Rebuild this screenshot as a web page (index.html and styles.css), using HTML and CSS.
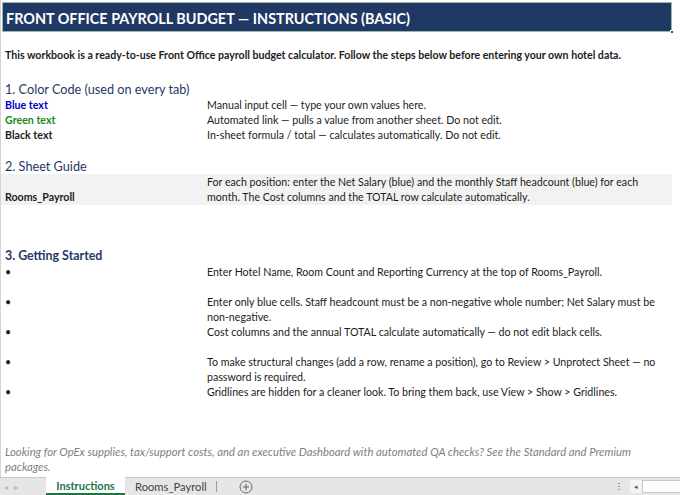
FILE: index.html
```html
<!DOCTYPE html>
<html lang="en">
<head>
<meta charset="utf-8">
<title>Front Office Payroll Budget — Instructions</title>
<link rel="stylesheet" href="styles.css">
</head>
<body>
<div class="window">
  <div class="sheet">
    <div class="title-cell">
      <span class="title-text">FRONT OFFICE PAYROLL BUDGET — INSTRUCTIONS (BASIC)</span>
      <span class="fill-handle"></span>
    </div>

    <div class="row intro">This workbook is a ready-to-use Front Office payroll budget calculator. Follow the steps below before entering your own hotel data.</div>

    <div class="row heading h1">1. Color Code (used on every tab)</div>
    <div class="row pair">
      <div class="col-a bold blue">Blue text</div>
      <div class="col-b">Manual input cell — type your own values here.</div>
    </div>
    <div class="row pair">
      <div class="col-a bold green">Green text</div>
      <div class="col-b">Automated link — pulls a value from another sheet. Do not edit.</div>
    </div>
    <div class="row pair">
      <div class="col-a bold">Black text</div>
      <div class="col-b">In-sheet formula / total — calculates automatically. Do not edit.</div>
    </div>

    <div class="row heading h2">2. Sheet Guide</div>
    <div class="row pair band">
      <div class="col-a bold">Rooms_Payroll</div>
      <div class="col-b">For each position: enter the Net Salary (blue) and the monthly Staff headcount (blue) for each<br>month. The Cost columns and the TOTAL row calculate automatically.</div>
    </div>

    <div class="row heading h3">3. Getting Started</div>
    <div class="steps">
      <div class="row step">
        <div class="col-a">•</div>
        <div class="col-b">Enter Hotel Name, Room Count and Reporting Currency at the top of Rooms_Payroll.</div>
      </div>
      <div class="row step">
        <div class="col-a">•</div>
        <div class="col-b">Enter only blue cells. Staff headcount must be a non-negative whole number; Net Salary must be<br>non-negative.</div>
      </div>
      <div class="row step">
        <div class="col-a">•</div>
        <div class="col-b">Cost columns and the annual TOTAL calculate automatically — do not edit black cells.</div>
      </div>
      <div class="row step">
        <div class="col-a">•</div>
        <div class="col-b">To make structural changes (add a row, rename a position), go to Review &gt; Unprotect Sheet — no<br>password is required.</div>
      </div>
      <div class="row step">
        <div class="col-a">•</div>
        <div class="col-b">Gridlines are hidden for a cleaner look. To bring them back, use View &gt; Show &gt; Gridlines.</div>
      </div>
    </div>

    <div class="row footer">Looking for OpEx supplies, tax/support costs, and an executive Dashboard with automated QA checks? See the Standard and Premium<br>packages.</div>
  </div>

  <div class="tabbar">
    <div class="nav-arrows"><span>&#9666;</span><span>&#9656;</span></div>
    <div class="tab active">Instructions</div>
    <div class="tab">Rooms_Payroll</div>
    <div class="tab-sep"></div>
    <div class="add-sheet">
      <svg width="14" height="14" viewBox="0 0 14 14"><circle cx="7" cy="7" r="6" fill="none" stroke="#6b6b6b" stroke-width="1"/><path d="M7 3.8v6.4M3.8 7h6.4" stroke="#6b6b6b" stroke-width="1.2"/></svg>
    </div>
    <div class="spacer"></div>
    <div class="split-dots"></div>
    <div class="hscroll-btn">&#9666;</div>
    <div class="hscroll-track"></div>
  </div>
</div>
</body>
</html>
```

FILE: styles.css
```css
* { box-sizing: border-box; }

html, body {
  margin: 0;
  padding: 0;
  background: #ffffff;
}

body {
  font-family: Lato, "Open Sans", sans-serif;
  color: #1c1c1c;
  width: 680px;
  height: 495px;
  overflow: hidden;
}

.window {
  display: flex;
  flex-direction: column;
  height: 495px;
}

.sheet {
  height: 477px;
  border-left: 1px solid #d4d4d4;
  display: flex;
  flex-direction: column;
  overflow: hidden;
}

/* merged title cell */
.title-cell {
  position: relative;
  margin: 2px 8px 16px 1px;
  height: 30px;
  background: #1f3864;
  border: 1px solid #9bb9ab;
  display: flex;
  align-items: center;
  padding: 2px 0 0 3px;
}

.title-text {
  color: #ffffff;
  font-weight: 700;
  font-size: 14.4px;
}

.fill-handle {
  position: absolute;
  right: -3px;
  bottom: -3px;
  width: 4px;
  height: 4px;
  background: #1d5a3a;
  border: 1px solid #ffffff;
}

.row {
  padding-left: 4px;
  font-size: 10.65px;
  line-height: 15px;
}

.intro {
  height: 15px;
  font-weight: 700;
  font-size: 10.6px;
  margin-bottom: 18px;
}

.heading {
  height: 16px;
  line-height: 16px;
  color: #1f3864;
  font-size: 12.7px;
}

.h2 { margin-top: 16px; }
.h3 { margin-top: 43px; font-weight: 700; font-size: 12.4px; }

.pair {
  display: grid;
  grid-template-columns: 202px 1fr;
  height: 15px;
}

.band {
  height: 31px;
  background: #f2f2f2;
  margin-right: 8px;
  align-items: end;
  padding-bottom: 0;
}

.band .col-b { padding-bottom: 1px; }
.band .col-a { padding-bottom: 1px; }

.bold { font-weight: 700; }
.blue { color: #0000c8; }
.green { color: #1a8a1a; }

.step {
  display: grid;
  grid-template-columns: 202px 1fr;
  height: 30px;
  align-items: start;
}

.footer {
  margin-top: 30px;
  font-style: italic;
  font-size: 11.3px;
  color: #808080;
}

/* sheet tabs strip */
.tabbar {
  height: 18px;
  background: #e6e6e6;
  border-top: 1px solid #c8c8c8;
  display: flex;
  align-items: stretch;
  font-size: 11px;
  color: #444444;
}

.nav-arrows {
  width: 46px;
  display: flex;
  gap: 6px;
  padding-left: 4px;
  align-items: center;
  color: #b8b8b8;
  font-size: 8px;
}

.tab {
  display: flex;
  align-items: center;
  padding: 0 9px 0 10px;
  margin-top: -1px;
  font-size: 11.2px;
}

.tab.active {
  background: #ffffff;
  color: #217346;
  font-weight: 700;
  font-size: 11px;
  border-bottom: 2px solid #217346;
  width: 79px;
  justify-content: center;
  padding: 0;
}

.tab-sep {
  width: 1px;
  margin: 3px 0 3px 0;
  background: #9a9a9a;
}

.add-sheet {
  display: flex;
  align-items: center;
  margin-left: 22px;
}

.spacer { flex: 1; }

.split-dots {
  width: 2px;
  margin: 4px 10px 0 0;
  height: 10px;
  background-image: radial-gradient(circle, #9a9a9a 45%, transparent 50%);
  background-size: 2px 3px;
}

.hscroll-btn {
  width: 12px;
  font-size: 7px;
  color: #555555;
  display: flex;
  align-items: center;
  justify-content: center;
  background: #f4f4f4;
  margin-top: 2px;
  margin-bottom: 2px;
}

.hscroll-track {
  width: 38px;
  background: #ffffff;
  border: 1px solid #c8c8c8;
  border-right: none;
  margin-top: 2px;
  margin-bottom: 2px;
}
```
